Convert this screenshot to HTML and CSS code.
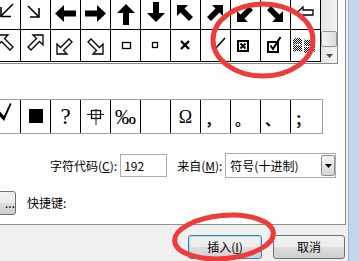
FILE: index.html
```html
<!doctype html>
<html>
  <head>
    <meta charset="utf-8">
    <title>符号</title>
    <link rel="stylesheet" href="styles.css">
  </head>
  <body>
    <div class="window">
      <div class="dialog">
        <div class="page">
          <!-- symbol list, scrolled -->
          <div class="listbox">
            <div class="grid">
              <div class="cell"><svg width="29" height="31"><path d="M22 6L10 18M10 9V18.5H20" class="thin"/></svg></div>
              <div class="cell"><svg width="29" height="31"><path d="M7 8L18 19M18 10V19H9" class="thin"/></svg></div>
              <div class="cell"><svg width="29" height="31"><polygon points="4,15.5 13,7 13,12.5 25,12.5 25,18.5 13,18.5 13,24"/></svg></div>
              <div class="cell"><svg width="29" height="31"><polygon points="25,15.5 16,7 16,12.5 4,12.5 4,18.5 16,18.5 16,24"/></svg></div>
              <div class="cell"><svg width="29" height="31"><polygon points="15,6 24,15 18,15 18,27 12,27 12,15 6,15"/></svg></div>
              <div class="cell"><svg width="29" height="31"><polygon points="12,4 18,4 18,15 24,15 15,24 6,15 12,15"/></svg></div>
              <div class="cell"><svg width="29" height="31"><polygon points="6,7 17,7 13.5,10.5 22,19 18,23 9.5,14.5 6,18"/></svg></div>
              <div class="cell"><svg width="29" height="31"><polygon points="22,7 11,7 14.5,10.5 6,19 10,23 18.5,14.5 22,18"/></svg></div>
              <div class="cell"><svg width="29" height="31"><polygon points="6,24 17,24 13.5,20.5 22,12 18,8 9.5,16.5 6,13"/></svg></div>
              <div class="cell"><svg width="29" height="31"><polygon points="22,24 11,24 14.5,20.5 6,12 10,8 18.5,16.5 22,13"/></svg></div>
              <div class="cell"><svg width="29" height="31"><polygon class="outline" points="6,14.5 12,9 12,12 22,12 22,17 12,17 12,20"/></svg></div>

              <div class="cell"><svg width="29" height="31"><polygon class="outline" points="7,5 17,5 13.5,8.5 22,17 19,20 10.5,11.5 7,15"/></svg></div>
              <div class="cell"><svg width="29" height="31"><polygon class="outline" points="22,5 12,5 15.5,8.5 7,17 10,20 18.5,11.5 22,15"/></svg></div>
              <div class="cell"><svg width="29" height="31"><polygon class="outline" points="6,24 16,24 12.5,20.5 21,12 18,9 9.5,17.5 6,14"/></svg></div>
              <div class="cell"><svg width="29" height="31"><polygon class="outline" points="22,24 12,24 15.5,20.5 7,12 10,9 18.5,17.5 22,14"/></svg></div>
              <div class="cell"><svg width="29" height="31"><rect class="outline" x="11.5" y="12.5" width="8" height="6"/></svg></div>
              <div class="cell"><svg width="29" height="31"><rect class="outline" x="11.5" y="12.5" width="5" height="5"/></svg></div>
              <div class="cell"><svg width="29" height="31"><path d="M10 11L18 19M18 11L10 19" class="bold"/></svg></div>
              <div class="cell"><svg width="29" height="31"><path d="M12 13L15 18L24 8" class="thin"/></svg></div>
              <div class="cell"><svg width="29" height="31"><rect class="box" x="7" y="11" width="10" height="10"/><path d="M9.5 13.5L14.5 18.5M14.5 13.5L9.5 18.5" class="bold2"/></svg></div>
              <div class="cell"><svg width="29" height="31"><rect class="box" x="7" y="12" width="10" height="10"/><path d="M9.5 15.5L12 19L19.5 7" class="bold2"/></svg></div>
              <div class="cell"><svg width="29" height="31">
                <defs>
                  <pattern id="dots" width="2" height="2" patternUnits="userSpaceOnUse">
                    <rect width="1" height="1" fill="#111"/>
                    <rect x="1" y="1" width="1" height="1" fill="#3a5a9a"/>
                  </pattern>
                </defs>
                <path d="M2 9Q6 7 11 9V15Q6 13 2 15Z M13 9.5Q18 11 24 8V14.5Q18 17 13 15.5Z M2 16Q6 14 11 16V22Q6 20 2 22Z M13 16.5Q18 18 24 15.5V21.5Q18 24 13 22.5Z" fill="url(#dots)"/>
              </svg></div>
            </div>
            <div class="scrollbar">
              <div class="sb-track"></div>
              <div class="sb-thumb"></div>
              <div class="sb-down"><svg width="7" height="4"><polygon points="0,0 7,0 3.5,4" fill="#4d4d4d"/></svg></div>
            </div>
          </div>

          <!-- recently used -->
          <div class="recent">
            <div class="cell"><svg width="29" height="33"><path d="M5 12L8 10.5L13 16L19 3L20.5 4L13 21Z"/></svg></div>
            <div class="cell"><svg width="29" height="33"><rect x="8" y="9" width="14" height="14"/></svg></div>
            <div class="cell sym">?</div>
            <div class="cell"><svg width="29" height="33"><rect class="outline" x="10.5" y="10.5" width="9" height="8"/><path d="M6 14.5H23M15 9V25" class="hair"/></svg></div>
            <div class="cell sym permil">‰</div>
            <div class="cell"></div>
            <div class="cell sym omega">Ω</div>
            <div class="cell cjk">，</div>
            <div class="cell cjk">。</div>
            <div class="cell cjk">、</div>
            <div class="cell cjk">；</div>
          </div>

          <div class="code-row">
            <span>字符代码(<u>C</u>):</span>
            <div class="field">192</div>
            <span class="from">来自(<u>M</u>):</span>
            <div class="select">
              <span class="select-text">符号(十进制)</span>
              <span class="select-btn"><svg width="7" height="4"><polygon points="0,0 7,0 3.5,4" fill="#000"/></svg></span>
            </div>
          </div>

          <div class="key-row">
            <button class="btn key-btn">...</button>
            <span class="key-label">快捷键:</span>
          </div>
        </div>

        <div class="buttons">
          <button class="btn default">插入(<u>I</u>)</button>
          <button class="btn cancel">取消</button>
        </div>
      </div>
      <div class="frame"></div>

      <svg class="marks" width="359" height="261">
        <ellipse cx="263" cy="40" rx="50" ry="36"/>
        <ellipse cx="224" cy="237" rx="49.5" ry="21.5" transform="rotate(-5 224 237)"/>
      </svg>
    </div>
  </body>
</html>
```

FILE: styles.css
```css
body {
  margin: 0;
  width: 359px;
  height: 261px;
  overflow: hidden;
  font-family: "Noto Sans CJK SC", "Microsoft YaHei", sans-serif;
  font-size: 12px;
  line-height: 16px;
  color: #000;
  background: #f0f0f0;
}
.window {
  position: relative;
  display: flex;
  height: 261px;
}
.dialog {
  width: 349px;
  background: #f0f0f0;
}
.page {
  box-sizing: border-box;
  width: 346px;
  height: 225px;
  background: #fff;
  border-right: 1px solid #898c95;
  border-bottom: 1px solid #8e8f8f;
  overflow: hidden;
}

/* symbol grid */
.listbox {
  display: flex;
  width: max-content;
  margin: -3px 0 0 -10px;
  border: 1px solid #828790;
}
.grid {
  display: grid;
  grid-template-columns: repeat(11, 30px);
  grid-auto-rows: 32px;
  padding-bottom: 1px;
}
.cell {
  box-sizing: border-box;
  border-right: 1px solid #000;
  border-bottom: 1px solid #000;
}
.cell svg {
  display: block;
}
.cell polygon, .cell rect {
  fill: #000;
}
.cell .outline {
  fill: #fff;
  stroke: #000;
  stroke-width: 1.3;
}
.cell .box {
  fill: #fff;
  stroke: #000;
  stroke-width: 2;
}
.thin {
  fill: none;
  stroke: #000;
  stroke-width: 1.6;
}
.bold {
  fill: none;
  stroke: #000;
  stroke-width: 2.4;
}
.bold2 {
  fill: none;
  stroke: #000;
  stroke-width: 2;
}
.hair {
  fill: none;
  stroke: #222;
  stroke-width: 1;
}

.scrollbar {
  width: 16px;
  display: flex;
  flex-direction: column;
  background: linear-gradient(to right, #e3e3e3, #f4f4f4);
}
.sb-track {
  height: 33px;
}
.sb-thumb {
  box-sizing: border-box;
  height: 16px;
  margin-bottom: 1px;
  border: 1px solid #979797;
  border-radius: 2px;
  background: linear-gradient(to right, #f4f4f4, #dcdcdc);
}
.sb-down {
  flex: 1;
  display: flex;
  align-items: center;
  justify-content: center;
}

/* recently used symbols */
.recent {
  display: grid;
  grid-template-columns: repeat(10, 30px) 31px;
  grid-auto-rows: 33px;
  width: max-content;
  margin: 35px 0 0 -10px;
  border: 1px solid #a0a0a0;
}
.recent .cell {
  border-bottom: 0;
}
.recent .cell:last-child {
  border-right: 0;
}
.sym {
  display: flex;
  align-items: center;
  justify-content: center;
  font-family: "Liberation Serif", serif;
  font-size: 23px;
}
.permil {
  font-size: 21px;
}
.omega {
  font-size: 18px;
}
.cjk {
  padding: 11px 0 0 4px;
  font-size: 15px;
  font-weight: bold;
}

/* code row */
.code-row {
  display: flex;
  align-items: center;
  height: 25px;
  margin-top: 19px;
  padding-left: 50px;
}
.field {
  box-sizing: border-box;
  width: 47px;
  height: 23px;
  margin-left: 3px;
  padding-left: 3px;
  border: 1px solid #abadb3;
  line-height: 21px;
}
.from {
  margin-left: 10px;
}
.select {
  box-sizing: border-box;
  display: flex;
  align-items: center;
  width: 111px;
  height: 25px;
  margin-left: 3px;
  padding-left: 4px;
  border: 1px solid #abadb3;
}
.select-text {
  flex: 1;
}
.select-btn {
  box-sizing: border-box;
  display: flex;
  align-items: center;
  justify-content: center;
  width: 14px;
  height: 21px;
  border: 1px solid #8e8f8f;
  border-radius: 2px;
  background: linear-gradient(#f4f4f4, #d6d6d6);
}

/* shortcut row */
.key-row {
  display: flex;
  align-items: center;
  margin-top: 13px;
}
.key-btn {
  width: 40px;
  margin-left: -24px;
  text-align: right;
  padding-right: 7px;
}
.key-label {
  margin-left: 11px;
}

/* buttons */
.btn {
  box-sizing: border-box;
  height: 24px;
  padding: 0;
  border: 1px solid #707070;
  border-radius: 3px;
  background: linear-gradient(#f2f2f2, #ebebeb 50%, #dddddd 50%, #cfcfcf);
  font: inherit;
  color: #000;
}
.buttons {
  display: flex;
  justify-content: flex-end;
  gap: 11px;
  padding: 10px 3px 0 0;
}
.default {
  width: 74px;
  border-color: #3c7fb1;
  box-shadow: inset 0 0 0 1px #a8dcf8;
}
.cancel {
  width: 72px;
}

.frame {
  width: 10px;
  border-left: 1px solid #9fb2c8;
  background: #c4d6ec;
}

/* red annotation marks */
.marks {
  position: absolute;
  left: 0;
  top: 0;
  pointer-events: none;
}
.marks ellipse {
  fill: none;
  stroke: #ef3b3b;
  stroke-width: 5;
}
```
